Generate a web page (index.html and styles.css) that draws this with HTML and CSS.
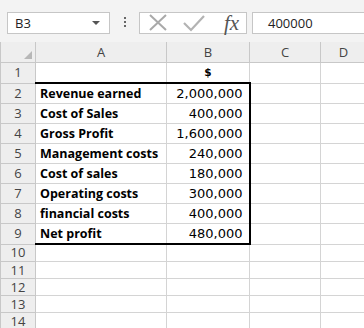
FILE: index.html
```html
<!DOCTYPE html>
<html lang="en">
<head>
    <meta charset="UTF-8">
    <title>Sheet1</title>
    <link rel="stylesheet" href="styles.css">
</head>
<body>
    <div class="toolbar">
        <div class="namebox">
            <span>B3</span>
            <span class="arrow"></span>
        </div>
        <div class="dots">
            <span></span><span></span><span></span>
        </div>
        <div class="fxbox">
            <svg class="icon" width="20" height="20" viewBox="0 0 20 20">
                <path d="M2 2 L18 17 M18 2 L2 17" stroke="#a9a9a9" stroke-width="2" fill="none"/>
            </svg>
            <svg class="icon" width="24" height="20" viewBox="0 0 24 20">
                <path d="M2 10 L9 17 L22 3" stroke="#b3b3b3" stroke-width="2.2" fill="none"/>
            </svg>
            <span class="fx">fx</span>
        </div>
        <div class="formula">400000</div>
    </div>

    <table class="grid">
        <colgroup>
            <col class="c-row">
            <col class="c-a">
            <col class="c-b">
            <col class="c-c">
            <col class="c-d">
        </colgroup>
        <tr class="head">
            <th class="corner"><span class="tri"></span></th>
            <th>A</th>
            <th>B</th>
            <th>C</th>
            <th>D</th>
        </tr>
        <tr>
            <th>1</th>
            <td></td>
            <td class="cur">$</td>
            <td></td>
            <td></td>
        </tr>
        <tr>
            <th>2</th>
            <td class="box lbl top">Revenue earned</td>
            <td class="box num top right">2,000,000</td>
            <td></td>
            <td></td>
        </tr>
        <tr>
            <th>3</th>
            <td class="box lbl">Cost of Sales</td>
            <td class="box num right">400,000</td>
            <td></td>
            <td></td>
        </tr>
        <tr>
            <th>4</th>
            <td class="box lbl">Gross Profit</td>
            <td class="box num right">1,600,000</td>
            <td></td>
            <td></td>
        </tr>
        <tr>
            <th>5</th>
            <td class="box lbl">Management costs</td>
            <td class="box num right">240,000</td>
            <td></td>
            <td></td>
        </tr>
        <tr>
            <th>6</th>
            <td class="box lbl">Cost of sales</td>
            <td class="box num right">180,000</td>
            <td></td>
            <td></td>
        </tr>
        <tr>
            <th>7</th>
            <td class="box lbl">Operating costs</td>
            <td class="box num right">300,000</td>
            <td></td>
            <td></td>
        </tr>
        <tr>
            <th>8</th>
            <td class="box lbl">financial costs</td>
            <td class="box num right">400,000</td>
            <td></td>
            <td></td>
        </tr>
        <tr>
            <th>9</th>
            <td class="box lbl bottom">Net profit</td>
            <td class="box num right bottom">480,000</td>
            <td></td>
            <td></td>
        </tr>
        <tr class="short"><th>10</th><td></td><td></td><td></td><td></td></tr>
        <tr class="short"><th>11</th><td></td><td></td><td></td><td></td></tr>
        <tr class="short"><th>12</th><td></td><td></td><td></td><td></td></tr>
        <tr class="short"><th>13</th><td></td><td></td><td></td><td></td></tr>
        <tr class="short"><th>14</th><td></td><td></td><td></td><td></td></tr>
    </table>
</body>
</html>
```

FILE: styles.css
```css
body {
    margin: 0;
    width: 364px;
    height: 328px;
    overflow: hidden;
    background-color: #ffffff;
    font-family: "Open Sans", sans-serif;
}

/* formula bar */
.toolbar {
    display: flex;
    align-items: flex-start;
    height: 42px;
    box-sizing: border-box;
    padding: 12px 0 0 7px;
    background-color: #f3f3f3;
}

.namebox {
    display: flex;
    align-items: center;
    justify-content: space-between;
    width: 103px;
    height: 22px;
    box-sizing: border-box;
    padding: 0 9px 0 7px;
    background-color: #ffffff;
    border: 1px solid #c6c6c6;
    font-size: 13px;
    color: #222;
}

.arrow {
    width: 0;
    height: 0;
    border-left: 4px solid transparent;
    border-right: 4px solid transparent;
    border-top: 4px solid #555;
}

.dots {
    display: flex;
    flex-direction: column;
    align-items: center;
    gap: 2px;
    width: 29px;
    padding-top: 5px;
}

.dots span {
    width: 2px;
    height: 2px;
    background-color: #666;
}

.fxbox {
    display: flex;
    align-items: center;
    width: 108px;
    height: 22px;
    box-sizing: border-box;
    padding-left: 8px;
    gap: 14px;
    background-color: #ffffff;
    border: 1px solid #c6c6c6;
}

.fx {
    font-family: "Liberation Serif", serif;
    font-style: italic;
    font-size: 21px;
    color: #555;
    margin-left: 4px;
    line-height: 20px;
}

.formula {
    flex: 1;
    height: 22px;
    box-sizing: border-box;
    margin-left: 5px;
    margin-right: -2px;
    padding: 1px 0 0 15px;
    background-color: #ffffff;
    border: 1px solid #c6c6c6;
    font-size: 13px;
    color: #222;
}

/* sheet grid */
.grid {
    border-collapse: collapse;
    table-layout: fixed;
    width: 366px;
}

.c-row { width: 35px; }
.c-a { width: 131px; }
.c-b { width: 83px; }
.c-c { width: 71px; }
.c-d { width: 46px; }

.grid td,
.grid th {
    height: 19px;
    padding: 0 4px;
    border: 1px solid #d4d4d4;
    white-space: nowrap;
    overflow: hidden;
    line-height: 19px;
}

.grid th {
    background-color: #eeeeee;
    border-color: #c8c8c8;
    font-weight: normal;
    font-size: 13px;
    color: #444;
    text-align: center;
}

.head th {
    height: 20px;
    border-top: none;
}

.short th,
.short td {
    height: 16px;
    line-height: 15px;
}

.corner {
    position: relative;
}

.tri {
    position: absolute;
    right: 3px;
    bottom: 3px;
    width: 0;
    height: 0;
    border-left: 8px solid transparent;
    border-bottom: 8px solid #b7b7b7;
}

.cur {
    text-align: center;
    font-family: "DejaVu Sans", sans-serif;
    font-weight: bold;
    font-size: 10.5px;
}

.box {
    border: 1px solid #000000;
    color: #000;
}

.lbl {
    font-family: "Open Sans", sans-serif;
    font-weight: bold;
    font-size: 12.5px;
}

.grid .num {
    font-family: "DejaVu Sans", sans-serif;
    font-size: 13px;
    text-align: right;
    padding-right: 6px;
}

.grid .top { border-top: 2px solid #000; }
.grid .bottom { border-bottom: 2px solid #000; }
.grid .right { border-right: 2px solid #000; }
```
